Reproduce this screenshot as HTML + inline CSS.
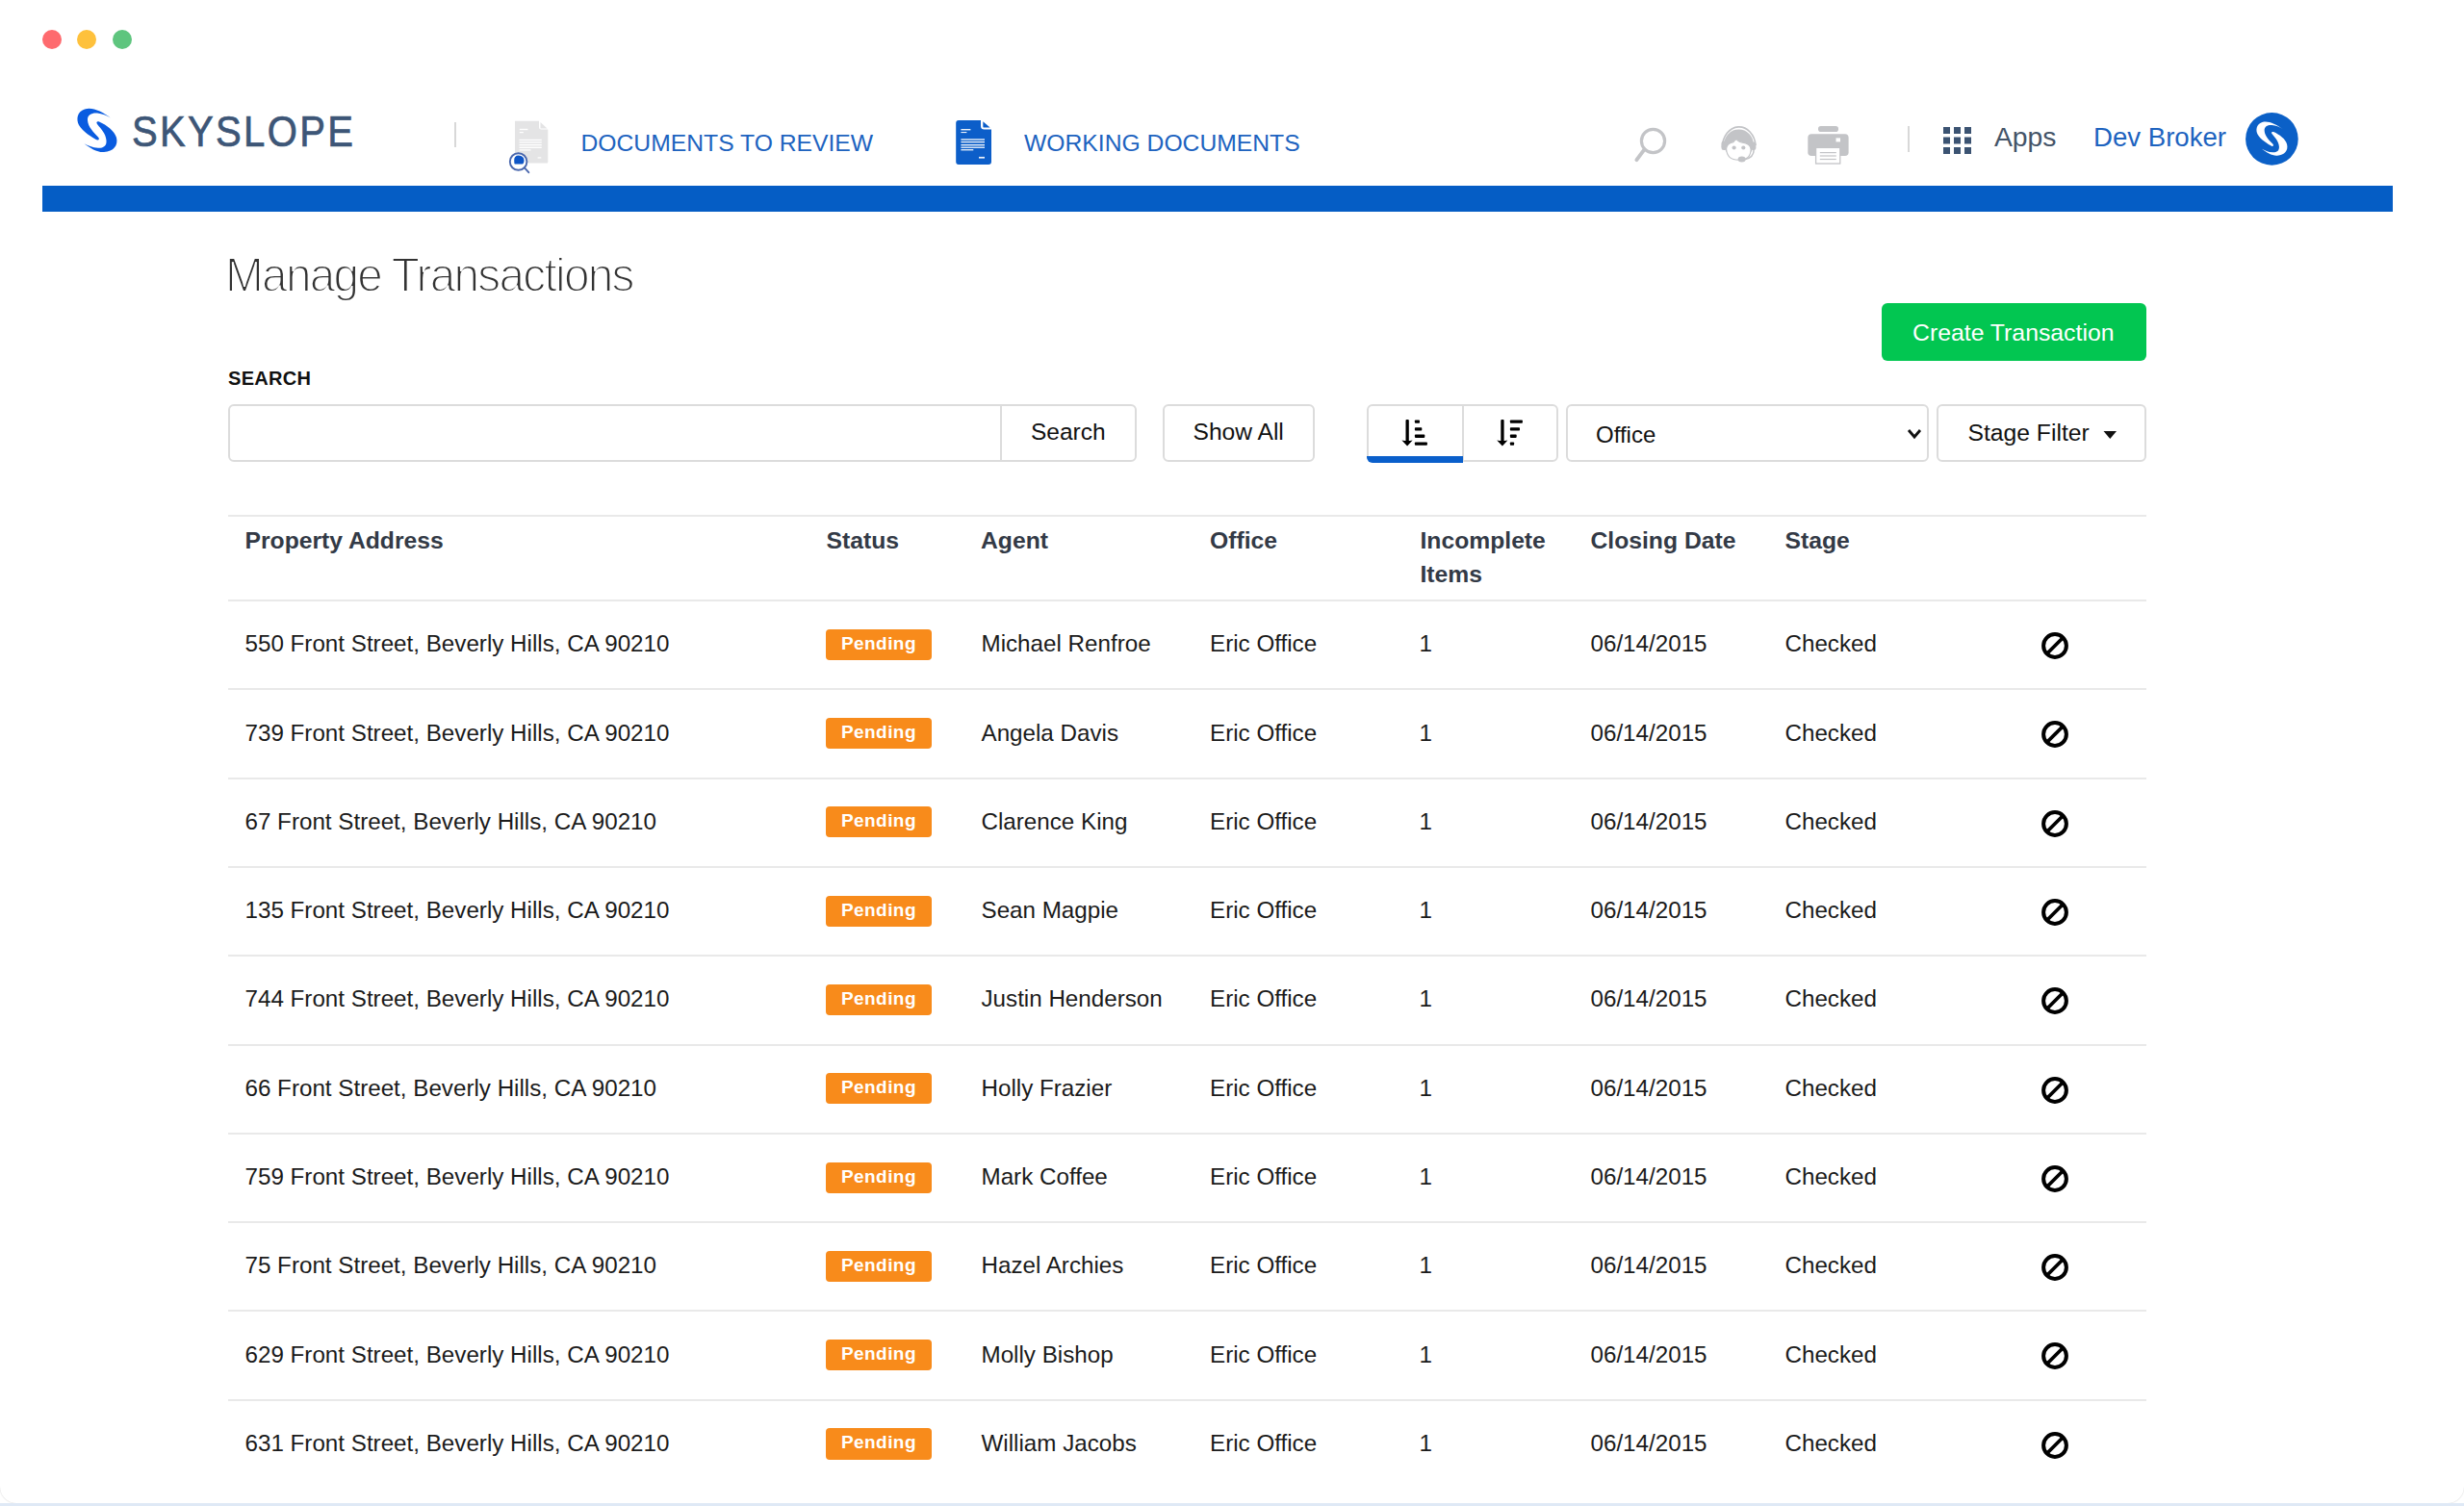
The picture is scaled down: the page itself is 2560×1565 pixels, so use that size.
<!DOCTYPE html>
<html><head><meta charset="utf-8">
<style>
html,body{margin:0;padding:0;}
body{width:2560px;height:1565px;position:relative;overflow:hidden;background:#fff;font-family:"Liberation Sans",sans-serif;}
.win{position:absolute;left:0;top:0;width:2560px;height:1562px;background:#fff;border-radius:0 0 17px 17px;box-shadow:0 0 1.5px rgba(0,0,0,0.22);}
.strip{position:absolute;left:0;top:1562px;width:2560px;height:3px;background:#dfe9f6;}
.t{position:absolute;white-space:nowrap;line-height:1;}
.dot{position:absolute;width:20px;height:20px;border-radius:50%;top:31px;}
.bar{position:absolute;left:44px;top:193px;width:2442px;height:27px;background:#055dc5;}
.hl{position:absolute;left:237px;width:1993px;height:2px;background:#e9e9e9;}
.badge{position:absolute;left:858.3px;width:109.3px;height:32.2px;background:#f88b1b;border-radius:4px;color:#fff;font-weight:700;font-size:19px;letter-spacing:0.45px;line-height:30.6px;text-align:center;}
.ban{position:absolute;left:2120px;width:30px;height:30px;}
.btn{position:absolute;box-sizing:border-box;border:2px solid #dcdcdc;border-radius:6px;background:#fff;}
</style></head><body>
<div class="win">
<div class="dot" style="left:44px;background:#fe6a6e"></div>
<div class="dot" style="left:80px;background:#fec13c"></div>
<div class="dot" style="left:117px;background:#5ec57e"></div>

<!-- logo -->
<svg style="position:absolute;left:70px;top:105px" width="60" height="60" viewBox="0 0 60 60">
<path id="lg1" d="M45 17.5 C36 11 26 6 18 8.5 C10 11 9 19 12 25 C16 32 26 38 31 40.5 C33 41 33.5 39 32 37.5 C27 32 21.5 27 21 20 C20.5 14 26 12 31 12.5 C36 13 41 15 45 17.5 Z" fill="#0a5ce0"/>
<path id="lg2" d="M17.5 44.2 C24 49 31 53.5 38 53 C48 52.5 53 46 51 38 C49 31 41 25 33 21.5 C31 20.8 29.5 22 31 24 C35 29 40 34 40.5 41 C41 47 37 49 32 48.8 C26 48.5 21 46 17.5 44.2 Z" fill="#0a5ce0"/>
</svg>
<div class="t" style="left:137px;top:114px;font-size:45px;color:#3d5677;letter-spacing:2.6px;transform:scaleX(0.89);transform-origin:0 0;-webkit-text-stroke:0.7px #3d5677">SKYSLOPE</div>
<div style="position:absolute;left:472px;top:127px;width:2px;height:26px;background:#d8d8d8"></div>

<!-- nav docs to review icon -->
<svg style="position:absolute;left:520px;top:115px" width="60" height="70" viewBox="0 0 60 70">
<path d="M15 10.7 H40 V17 Q40 19.5 42.5 19.5 H49.3 V53.5 Q49.3 54.4 48.4 54.4 H15.9 Q15 54.4 15 53.5 Z" fill="#e4e4e5"/>
<path d="M41.5 12 L48.5 18.5 H41.5 Z" fill="#e4e4e5"/>
<g fill="#fff">
<rect x="19.8" y="18.8" width="8.6" height="1.4"/><rect x="19.8" y="22" width="4" height="1.2"/>
<rect x="19.5" y="29.8" width="23.3" height="1.3"/><rect x="19.5" y="32.3" width="23.3" height="1.3"/><rect x="19.5" y="35" width="23.3" height="1.3"/><rect x="19.5" y="37.6" width="23.3" height="1.3"/><rect x="19.5" y="40.3" width="12" height="1.2"/>
<rect x="38.6" y="48.3" width="3.7" height="1.2"/>
</g>
<circle cx="18.6" cy="53" r="8.8" fill="#fff"/>
<circle cx="18.6" cy="53" r="8.8" fill="none" stroke="#4a67ad" stroke-width="1.9"/>
<path d="M14.2 52 Q14 46.5 18.8 46.5 Q24.3 46.8 24.5 51.5 Q24.5 55.2 22.5 55.5 H15 Q14.2 55.4 14.2 52 Z" fill="#0f56c6"/>
<line x1="24.7" y1="59.2" x2="29.3" y2="64.2" stroke="#4a67ad" stroke-width="1.9" stroke-linecap="round"/>
</svg>
<div class="t" style="left:603.5px;top:136.8px;font-size:24.7px;color:#1d63bf">DOCUMENTS TO REVIEW</div>

<svg style="position:absolute;left:993px;top:125px" width="40" height="48" viewBox="0 0 40 48">
<path d="M3 0 H26 V6 Q26 9.6 29.6 9.6 H37 V43 Q37 46 34 46 H3 Q0.2 46 0.2 43 V3 Q0.2 0 3 0 Z" fill="#0c5ec9"/>
<path d="M28.3 1.2 L35.6 7.6 H29.5 Q28.3 7.6 28.3 6.4 Z" fill="#0c5ec9"/>
<g fill="#fff" opacity="0.92">
<rect x="5.4" y="9" width="10" height="1.4"/><rect x="5.4" y="12" width="6" height="1.1"/>
<rect x="5.4" y="19.3" width="24.6" height="1.4"/><rect x="5.4" y="21.9" width="24.6" height="1.4"/><rect x="5.4" y="25" width="24.6" height="1.4"/><rect x="5.4" y="27.6" width="24.6" height="1.3"/><rect x="5.4" y="30.1" width="12.9" height="1.3"/>
<rect x="24" y="37.9" width="6" height="1.7"/>
</g></svg>
<div class="t" style="left:1064px;top:136.8px;font-size:24.7px;color:#1d63bf">WORKING DOCUMENTS</div>

<!-- right nav icons -->
<svg style="position:absolute;left:1690px;top:120px" width="50" height="52" viewBox="0 0 50 52">
<circle cx="27.5" cy="26.5" r="12.1" fill="none" stroke="#c3c4c7" stroke-width="3.2"/>
<line x1="18.6" y1="35.2" x2="10.4" y2="46.2" stroke="#c3c4c7" stroke-width="3.9" stroke-linecap="round"/>
</svg>
<svg style="position:absolute;left:1780px;top:120px" width="150" height="60" viewBox="0 0 150 60">
<path d="M9.5 33 A17.3 21.5 0 0 1 44 31" fill="none" stroke="#c3c4c7" stroke-width="1.7"/>
<circle cx="26.5" cy="29.8" r="15.2" fill="#c3c4c7"/>
<g fill="#c3c4c7"><rect x="8.5" y="26.5" width="5.6" height="9.5" rx="2.5"/><rect x="39" y="27.5" width="5.4" height="8.5" rx="2.5"/></g>
<path d="M13.6 34.5 Q14.5 28.3 21 27.6 Q23 24.6 24.6 25.1 Q27 28 33 28.6 Q38.8 30 39.1 35.5 Q38.8 46.3 26.5 46.3 Q14 46.2 13.6 34.5 Z" fill="#fff" stroke="#c3c4c7" stroke-width="1.1"/>
<g fill="#c3c4c7"><circle cx="21.6" cy="33.5" r="2.1"/><circle cx="31.3" cy="33.5" r="2.1"/><ellipse cx="29.6" cy="45.5" rx="4" ry="3"/></g>
<path d="M42.2 35 Q42.5 44 32 46" fill="none" stroke="#c3c4c7" stroke-width="1.5"/>
<g fill="#c3c4c7">
<rect x="109" y="11" width="21" height="6" rx="2.8"/>
<rect x="98.3" y="19.2" width="42.3" height="22.8" rx="3.8"/>
</g>
<rect x="127.5" y="23.4" width="4.5" height="4" fill="#fff"/>
<rect x="106.6" y="33.4" width="25.2" height="16.6" fill="#fff" stroke="#c3c4c7" stroke-width="1.3"/>
<g fill="#c3c4c7"><rect x="110.8" y="38" width="17" height="1.2"/><rect x="110.8" y="41.4" width="17" height="1.2"/><rect x="110.8" y="44.9" width="17" height="1.2"/></g>
</svg>
<div style="position:absolute;left:1982px;top:131px;width:2px;height:27px;background:#d8d8d8"></div>
<svg style="position:absolute;left:2019px;top:132px" width="30" height="28" viewBox="0 0 30 28">
<g fill="#3b5372">
<rect x="0" y="0" width="7" height="7"/><rect x="11" y="0" width="7" height="7"/><rect x="22" y="0" width="7" height="7"/>
<rect x="0" y="10.5" width="7" height="7"/><rect x="11" y="10.5" width="7" height="7"/><rect x="22" y="10.5" width="7" height="7"/>
<rect x="0" y="21" width="7" height="7"/><rect x="11" y="21" width="7" height="7"/><rect x="22" y="21" width="7" height="7"/>
</g></svg>
<div class="t" style="left:2072px;top:128px;font-size:28.3px;color:#445468">Apps</div>
<div class="t" style="left:2175px;top:129px;font-size:27.6px;color:#1d63bf">Dev Broker</div>
<svg style="position:absolute;left:2320px;top:105px" width="80" height="80" viewBox="0 0 80 80">
<circle cx="40.4" cy="39.4" r="27.3" fill="#0b60c7"/>
<g transform="translate(16.3,15.3) scale(0.78)" fill="#fff">
<path d="M45 17.5 C36 11 26 6 18 8.5 C10 11 9 19 12 25 C16 32 26 38 31 40.5 C33 41 33.5 39 32 37.5 C27 32 21.5 27 21 20 C20.5 14 26 12 31 12.5 C36 13 41 15 45 17.5 Z"/>
<path d="M17.5 44.2 C24 49 31 53.5 38 53 C48 52.5 53 46 51 38 C49 31 41 25 33 21.5 C31 20.8 29.5 22 31 24 C35 29 40 34 40.5 41 C41 47 37 49 32 48.8 C26 48.5 21 46 17.5 44.2 Z"/>
</g></svg>

<div class="bar"></div>

<!-- title -->
<div class="t" style="left:234px;top:261px;font-size:49.5px;color:#333;transform:scaleX(0.965);transform-origin:0 0;-webkit-text-stroke:1.8px #fff;letter-spacing:-1.8px">Manage Transactions</div>

<div class="btn" style="left:1955px;top:315px;width:275px;height:60px;background:#02c651;border:none"></div>
<div class="t" style="left:1987px;top:334px;font-size:24.8px;color:#fff">Create Transaction</div>

<div class="t" style="left:237px;top:383px;font-size:20px;color:#111;font-weight:700;letter-spacing:0.3px">SEARCH</div>

<div class="btn" style="left:237px;top:420px;width:944px;height:60px;"></div>
<div style="position:absolute;left:1039px;top:421px;width:2px;height:58px;background:#dcdcdc"></div>
<div class="t" style="left:1071px;top:437px;font-size:24.5px;color:#111">Search</div>

<div class="btn" style="left:1208px;top:420px;width:158px;height:60px;"></div>
<div class="t" style="left:1239.5px;top:437px;font-size:24.6px;color:#111">Show All</div>

<div class="btn" style="left:1420px;top:420px;width:199px;height:60px;"></div>
<div style="position:absolute;left:1519px;top:421px;width:2px;height:58px;background:#dcdcdc"></div>
<div style="position:absolute;left:1420px;top:474px;width:100px;height:7px;background:#0a5fcb;border-radius:0 0 0 6px"></div>
<svg style="position:absolute;left:1440px;top:425px" width="160" height="50" viewBox="0 0 160 50">
<g fill="#000">
<rect x="20.5" y="11" width="3.3" height="23" rx="1"/>
<path d="M16.4 32.4 Q22.1 33.6 27.6 32.4 L22.1 38.5 Z"/>
<rect x="29.9" y="11.4" width="5.1" height="3.3" rx="0.8"/>
<rect x="29.9" y="19.2" width="7.4" height="3.3" rx="0.8"/>
<rect x="29.9" y="26.6" width="10.4" height="3.3" rx="0.8"/>
<rect x="29.9" y="34.4" width="13" height="3.3" rx="0.8"/>
<rect x="119.3" y="11" width="3.3" height="23" rx="1"/>
<path d="M115.2 32.4 Q120.9 33.6 126.4 32.4 L120.9 38.5 Z"/>
<rect x="128.9" y="11.4" width="13" height="3.3" rx="0.8"/>
<rect x="128.9" y="19.2" width="10.1" height="3.3" rx="0.8"/>
<rect x="128.9" y="26.6" width="6.8" height="3.3" rx="0.8"/>
<rect x="128.9" y="34.4" width="4.2" height="3.3" rx="0.8"/>
</g></svg>

<div class="btn" style="left:1627px;top:420px;width:377px;height:60px;"></div>
<div class="t" style="left:1658px;top:440px;font-size:24px;color:#111">Office</div>
<svg style="position:absolute;left:1980.5px;top:444.5px" width="16" height="12" viewBox="0 0 16 12"><path d="M2 2 L8 9 L14 2" fill="none" stroke="#111" stroke-width="2.8"/></svg>

<div class="btn" style="left:2012px;top:420px;width:218px;height:60px;"></div>
<div class="t" style="left:2044.5px;top:437.5px;font-size:24.7px;color:#111">Stage Filter</div>
<svg style="position:absolute;left:2184.5px;top:448px" width="15" height="9" viewBox="0 0 15 9"><path d="M0.5 0 H14 L7.25 8 Z" fill="#111"/></svg>

<div class="hl" style="top:535px"></div>
<div class="hl" style="top:623.0px"></div>
<div class="hl" style="top:715.3px"></div>
<div class="hl" style="top:807.6px"></div>
<div class="hl" style="top:899.9px"></div>
<div class="hl" style="top:992.2px"></div>
<div class="hl" style="top:1084.5px"></div>
<div class="hl" style="top:1176.8px"></div>
<div class="hl" style="top:1269.1px"></div>
<div class="hl" style="top:1361.4px"></div>
<div class="hl" style="top:1453.7px"></div>
<div class="t" style="left:254.5px;top:550.1px;font-size:24.7px;color:#333a46;font-weight:700;">Property Address</div>
<div class="t" style="left:858.5px;top:550.1px;font-size:24.7px;color:#333a46;font-weight:700;">Status</div>
<div class="t" style="left:1019px;top:550.1px;font-size:24.7px;color:#333a46;font-weight:700;">Agent</div>
<div class="t" style="left:1257px;top:550.1px;font-size:24.7px;color:#333a46;font-weight:700;">Office</div>
<div class="t" style="left:1475.5px;top:550.1px;font-size:24.7px;color:#333a46;font-weight:700;">Incomplete</div>
<div class="t" style="left:1652.5px;top:550.1px;font-size:24.7px;color:#333a46;font-weight:700;">Closing Date</div>
<div class="t" style="left:1854.5px;top:550.1px;font-size:24.7px;color:#333a46;font-weight:700;">Stage</div>
<div class="t" style="left:1475.5px;top:585.1px;font-size:24.7px;color:#333a46;font-weight:700;">Items</div>
<div class="t" style="left:254.5px;top:657.2px;font-size:24.2px;color:#1b1b1b;font-weight:400;">550 Front Street, Beverly Hills, CA 90210</div>
<div class="badge" style="top:653.7px">Pending</div>
<div class="t" style="left:1019.5px;top:657.2px;font-size:24.2px;color:#1b1b1b;font-weight:400;">Michael Renfroe</div>
<div class="t" style="left:1257px;top:657.2px;font-size:24.2px;color:#1b1b1b;font-weight:400;">Eric Office</div>
<div class="t" style="left:1474.5px;top:657.2px;font-size:24.2px;color:#1b1b1b;font-weight:400;">1</div>
<div class="t" style="left:1652.5px;top:657.2px;font-size:24.2px;color:#1b1b1b;font-weight:400;">06/14/2015</div>
<div class="t" style="left:1854.5px;top:657.2px;font-size:24.2px;color:#1b1b1b;font-weight:400;">Checked</div>
<div class="ban" style="top:656.0px"><svg width="30" height="30" viewBox="0 0 30 30"><circle cx="15" cy="15" r="11.9" fill="none" stroke="#000" stroke-width="4"/><line x1="7.5" y1="22.5" x2="22.5" y2="7.5" stroke="#000" stroke-width="3.8"/></svg></div>
<div class="t" style="left:254.5px;top:749.5px;font-size:24.2px;color:#1b1b1b;font-weight:400;">739 Front Street, Beverly Hills, CA 90210</div>
<div class="badge" style="top:746.0px">Pending</div>
<div class="t" style="left:1019.5px;top:749.5px;font-size:24.2px;color:#1b1b1b;font-weight:400;">Angela Davis</div>
<div class="t" style="left:1257px;top:749.5px;font-size:24.2px;color:#1b1b1b;font-weight:400;">Eric Office</div>
<div class="t" style="left:1474.5px;top:749.5px;font-size:24.2px;color:#1b1b1b;font-weight:400;">1</div>
<div class="t" style="left:1652.5px;top:749.5px;font-size:24.2px;color:#1b1b1b;font-weight:400;">06/14/2015</div>
<div class="t" style="left:1854.5px;top:749.5px;font-size:24.2px;color:#1b1b1b;font-weight:400;">Checked</div>
<div class="ban" style="top:748.3px"><svg width="30" height="30" viewBox="0 0 30 30"><circle cx="15" cy="15" r="11.9" fill="none" stroke="#000" stroke-width="4"/><line x1="7.5" y1="22.5" x2="22.5" y2="7.5" stroke="#000" stroke-width="3.8"/></svg></div>
<div class="t" style="left:254.5px;top:841.8px;font-size:24.2px;color:#1b1b1b;font-weight:400;">67 Front Street, Beverly Hills, CA 90210</div>
<div class="badge" style="top:838.3px">Pending</div>
<div class="t" style="left:1019.5px;top:841.8px;font-size:24.2px;color:#1b1b1b;font-weight:400;">Clarence King</div>
<div class="t" style="left:1257px;top:841.8px;font-size:24.2px;color:#1b1b1b;font-weight:400;">Eric Office</div>
<div class="t" style="left:1474.5px;top:841.8px;font-size:24.2px;color:#1b1b1b;font-weight:400;">1</div>
<div class="t" style="left:1652.5px;top:841.8px;font-size:24.2px;color:#1b1b1b;font-weight:400;">06/14/2015</div>
<div class="t" style="left:1854.5px;top:841.8px;font-size:24.2px;color:#1b1b1b;font-weight:400;">Checked</div>
<div class="ban" style="top:840.6px"><svg width="30" height="30" viewBox="0 0 30 30"><circle cx="15" cy="15" r="11.9" fill="none" stroke="#000" stroke-width="4"/><line x1="7.5" y1="22.5" x2="22.5" y2="7.5" stroke="#000" stroke-width="3.8"/></svg></div>
<div class="t" style="left:254.5px;top:934.1px;font-size:24.2px;color:#1b1b1b;font-weight:400;">135 Front Street, Beverly Hills, CA 90210</div>
<div class="badge" style="top:930.6px">Pending</div>
<div class="t" style="left:1019.5px;top:934.1px;font-size:24.2px;color:#1b1b1b;font-weight:400;">Sean Magpie</div>
<div class="t" style="left:1257px;top:934.1px;font-size:24.2px;color:#1b1b1b;font-weight:400;">Eric Office</div>
<div class="t" style="left:1474.5px;top:934.1px;font-size:24.2px;color:#1b1b1b;font-weight:400;">1</div>
<div class="t" style="left:1652.5px;top:934.1px;font-size:24.2px;color:#1b1b1b;font-weight:400;">06/14/2015</div>
<div class="t" style="left:1854.5px;top:934.1px;font-size:24.2px;color:#1b1b1b;font-weight:400;">Checked</div>
<div class="ban" style="top:932.9px"><svg width="30" height="30" viewBox="0 0 30 30"><circle cx="15" cy="15" r="11.9" fill="none" stroke="#000" stroke-width="4"/><line x1="7.5" y1="22.5" x2="22.5" y2="7.5" stroke="#000" stroke-width="3.8"/></svg></div>
<div class="t" style="left:254.5px;top:1026.4px;font-size:24.2px;color:#1b1b1b;font-weight:400;">744 Front Street, Beverly Hills, CA 90210</div>
<div class="badge" style="top:1022.9px">Pending</div>
<div class="t" style="left:1019.5px;top:1026.4px;font-size:24.2px;color:#1b1b1b;font-weight:400;">Justin Henderson</div>
<div class="t" style="left:1257px;top:1026.4px;font-size:24.2px;color:#1b1b1b;font-weight:400;">Eric Office</div>
<div class="t" style="left:1474.5px;top:1026.4px;font-size:24.2px;color:#1b1b1b;font-weight:400;">1</div>
<div class="t" style="left:1652.5px;top:1026.4px;font-size:24.2px;color:#1b1b1b;font-weight:400;">06/14/2015</div>
<div class="t" style="left:1854.5px;top:1026.4px;font-size:24.2px;color:#1b1b1b;font-weight:400;">Checked</div>
<div class="ban" style="top:1025.2px"><svg width="30" height="30" viewBox="0 0 30 30"><circle cx="15" cy="15" r="11.9" fill="none" stroke="#000" stroke-width="4"/><line x1="7.5" y1="22.5" x2="22.5" y2="7.5" stroke="#000" stroke-width="3.8"/></svg></div>
<div class="t" style="left:254.5px;top:1118.7px;font-size:24.2px;color:#1b1b1b;font-weight:400;">66 Front Street, Beverly Hills, CA 90210</div>
<div class="badge" style="top:1115.2px">Pending</div>
<div class="t" style="left:1019.5px;top:1118.7px;font-size:24.2px;color:#1b1b1b;font-weight:400;">Holly Frazier</div>
<div class="t" style="left:1257px;top:1118.7px;font-size:24.2px;color:#1b1b1b;font-weight:400;">Eric Office</div>
<div class="t" style="left:1474.5px;top:1118.7px;font-size:24.2px;color:#1b1b1b;font-weight:400;">1</div>
<div class="t" style="left:1652.5px;top:1118.7px;font-size:24.2px;color:#1b1b1b;font-weight:400;">06/14/2015</div>
<div class="t" style="left:1854.5px;top:1118.7px;font-size:24.2px;color:#1b1b1b;font-weight:400;">Checked</div>
<div class="ban" style="top:1117.5px"><svg width="30" height="30" viewBox="0 0 30 30"><circle cx="15" cy="15" r="11.9" fill="none" stroke="#000" stroke-width="4"/><line x1="7.5" y1="22.5" x2="22.5" y2="7.5" stroke="#000" stroke-width="3.8"/></svg></div>
<div class="t" style="left:254.5px;top:1211.0px;font-size:24.2px;color:#1b1b1b;font-weight:400;">759 Front Street, Beverly Hills, CA 90210</div>
<div class="badge" style="top:1207.5px">Pending</div>
<div class="t" style="left:1019.5px;top:1211.0px;font-size:24.2px;color:#1b1b1b;font-weight:400;">Mark Coffee</div>
<div class="t" style="left:1257px;top:1211.0px;font-size:24.2px;color:#1b1b1b;font-weight:400;">Eric Office</div>
<div class="t" style="left:1474.5px;top:1211.0px;font-size:24.2px;color:#1b1b1b;font-weight:400;">1</div>
<div class="t" style="left:1652.5px;top:1211.0px;font-size:24.2px;color:#1b1b1b;font-weight:400;">06/14/2015</div>
<div class="t" style="left:1854.5px;top:1211.0px;font-size:24.2px;color:#1b1b1b;font-weight:400;">Checked</div>
<div class="ban" style="top:1209.8px"><svg width="30" height="30" viewBox="0 0 30 30"><circle cx="15" cy="15" r="11.9" fill="none" stroke="#000" stroke-width="4"/><line x1="7.5" y1="22.5" x2="22.5" y2="7.5" stroke="#000" stroke-width="3.8"/></svg></div>
<div class="t" style="left:254.5px;top:1303.3px;font-size:24.2px;color:#1b1b1b;font-weight:400;">75 Front Street, Beverly Hills, CA 90210</div>
<div class="badge" style="top:1299.8px">Pending</div>
<div class="t" style="left:1019.5px;top:1303.3px;font-size:24.2px;color:#1b1b1b;font-weight:400;">Hazel Archies</div>
<div class="t" style="left:1257px;top:1303.3px;font-size:24.2px;color:#1b1b1b;font-weight:400;">Eric Office</div>
<div class="t" style="left:1474.5px;top:1303.3px;font-size:24.2px;color:#1b1b1b;font-weight:400;">1</div>
<div class="t" style="left:1652.5px;top:1303.3px;font-size:24.2px;color:#1b1b1b;font-weight:400;">06/14/2015</div>
<div class="t" style="left:1854.5px;top:1303.3px;font-size:24.2px;color:#1b1b1b;font-weight:400;">Checked</div>
<div class="ban" style="top:1302.1px"><svg width="30" height="30" viewBox="0 0 30 30"><circle cx="15" cy="15" r="11.9" fill="none" stroke="#000" stroke-width="4"/><line x1="7.5" y1="22.5" x2="22.5" y2="7.5" stroke="#000" stroke-width="3.8"/></svg></div>
<div class="t" style="left:254.5px;top:1395.6px;font-size:24.2px;color:#1b1b1b;font-weight:400;">629 Front Street, Beverly Hills, CA 90210</div>
<div class="badge" style="top:1392.1px">Pending</div>
<div class="t" style="left:1019.5px;top:1395.6px;font-size:24.2px;color:#1b1b1b;font-weight:400;">Molly Bishop</div>
<div class="t" style="left:1257px;top:1395.6px;font-size:24.2px;color:#1b1b1b;font-weight:400;">Eric Office</div>
<div class="t" style="left:1474.5px;top:1395.6px;font-size:24.2px;color:#1b1b1b;font-weight:400;">1</div>
<div class="t" style="left:1652.5px;top:1395.6px;font-size:24.2px;color:#1b1b1b;font-weight:400;">06/14/2015</div>
<div class="t" style="left:1854.5px;top:1395.6px;font-size:24.2px;color:#1b1b1b;font-weight:400;">Checked</div>
<div class="ban" style="top:1394.4px"><svg width="30" height="30" viewBox="0 0 30 30"><circle cx="15" cy="15" r="11.9" fill="none" stroke="#000" stroke-width="4"/><line x1="7.5" y1="22.5" x2="22.5" y2="7.5" stroke="#000" stroke-width="3.8"/></svg></div>
<div class="t" style="left:254.5px;top:1487.9px;font-size:24.2px;color:#1b1b1b;font-weight:400;">631 Front Street, Beverly Hills, CA 90210</div>
<div class="badge" style="top:1484.4px">Pending</div>
<div class="t" style="left:1019.5px;top:1487.9px;font-size:24.2px;color:#1b1b1b;font-weight:400;">William Jacobs</div>
<div class="t" style="left:1257px;top:1487.9px;font-size:24.2px;color:#1b1b1b;font-weight:400;">Eric Office</div>
<div class="t" style="left:1474.5px;top:1487.9px;font-size:24.2px;color:#1b1b1b;font-weight:400;">1</div>
<div class="t" style="left:1652.5px;top:1487.9px;font-size:24.2px;color:#1b1b1b;font-weight:400;">06/14/2015</div>
<div class="t" style="left:1854.5px;top:1487.9px;font-size:24.2px;color:#1b1b1b;font-weight:400;">Checked</div>
<div class="ban" style="top:1486.7px"><svg width="30" height="30" viewBox="0 0 30 30"><circle cx="15" cy="15" r="11.9" fill="none" stroke="#000" stroke-width="4"/><line x1="7.5" y1="22.5" x2="22.5" y2="7.5" stroke="#000" stroke-width="3.8"/></svg></div>

</div>
<div class="strip"></div>
</body></html>
